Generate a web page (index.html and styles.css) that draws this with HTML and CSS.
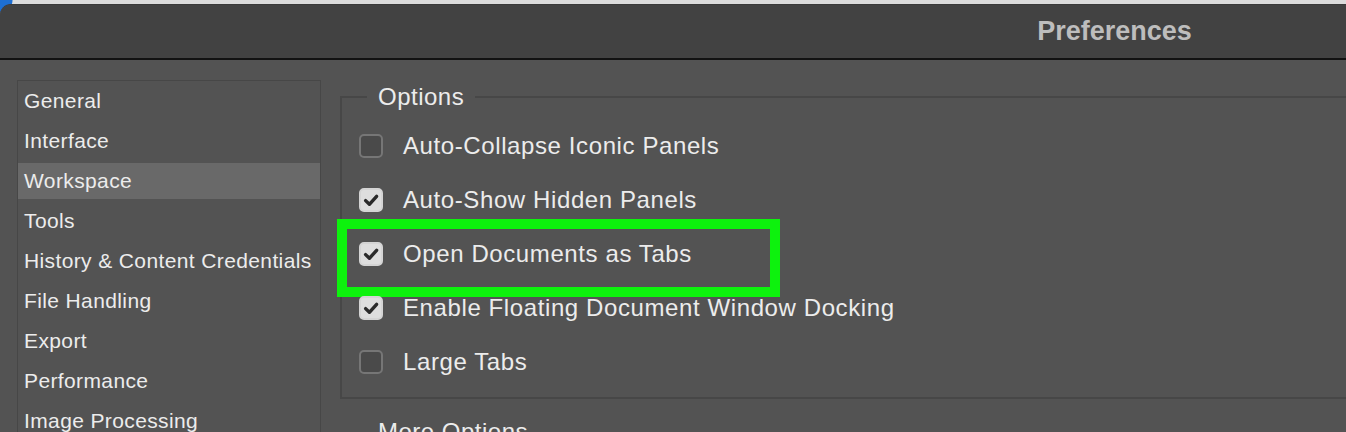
FILE: index.html
```html
<!DOCTYPE html>
<html lang="en">
<head>
<meta charset="utf-8">
<title>Preferences</title>
<link rel="stylesheet" href="styles.css">
</head>
<body>
<div class="window">
  <header class="titlebar"><h1 class="title">Preferences</h1></header>
  <main class="content">
    <nav class="sidebar">
      <ul class="nav-list">
        <li class="nav-item">General</li>
        <li class="nav-item">Interface</li>
        <li class="nav-item selected">Workspace</li>
        <li class="nav-item">Tools</li>
        <li class="nav-item">History &amp; Content Credentials</li>
        <li class="nav-item">File Handling</li>
        <li class="nav-item">Export</li>
        <li class="nav-item">Performance</li>
        <li class="nav-item">Image Processing</li>
      </ul>
    </nav>
    <section class="panel">
      <fieldset class="group">
        <legend class="legend">Options</legend>
        <label class="row"><span class="box"></span><span class="label">Auto-Collapse Iconic Panels</span></label>
        <label class="row"><span class="box checked"><svg viewBox="0 0 20 20" class="tick"><path d="M4.6 10.6 L8.4 14.3 L15.6 6.3"/></svg></span><span class="label">Auto-Show Hidden Panels</span></label>
        <label class="row highlighted"><span class="box checked"><svg viewBox="0 0 20 20" class="tick"><path d="M4.6 10.6 L8.4 14.3 L15.6 6.3"/></svg></span><span class="label">Open Documents as Tabs</span><span class="highlight"></span></label>
        <label class="row"><span class="box checked"><svg viewBox="0 0 20 20" class="tick"><path d="M4.6 10.6 L8.4 14.3 L15.6 6.3"/></svg></span><span class="label">Enable Floating Document Window Docking</span></label>
        <label class="row"><span class="box"></span><span class="label">Large Tabs</span></label>
      </fieldset>
      <div class="more"><span class="legend more-legend">More Options</span></div>
    </section>
  </main>
</div>
</body>
</html>
```
FILE: styles.css
```css
* { box-sizing: border-box; }
html, body { margin: 0; padding: 0; }
body {
  width: 1346px;
  height: 432px;
  overflow: hidden;
  background:
    radial-gradient(circle at 0 0, #1e6fd2 0 12px, transparent 13px),
    #dcdcdc;
  font-family: "Liberation Sans", Arial, sans-serif;
  color: #ececec;
}
.window {
  margin-top: 4px;
  width: 2229px;
  height: 500px;
  background: #535353;
  border-top-left-radius: 11px;
  overflow: hidden;
  border-top: 1px solid #3a3a3a;
}
.titlebar {
  height: 55px;
  background: #424242;
  border-bottom: 2px solid #121212;
  display: flex;
  align-items: center;
  justify-content: center;
}
.title {
  margin: 0;
  font-size: 27px;
  font-weight: bold;
  color: #bdbdbd;
}
.content {
  display: flex;
  align-items: flex-start;
  padding: 20px 0 0 17px;
}
.sidebar {
  width: 304px;
  height: 400px;
  border: 1px solid #474747;
  border-bottom: none;
  background: #535353;
  padding-top: 2px;
}
.nav-list {
  list-style: none;
  margin: 0;
  padding: 0;
  display: flex;
  flex-direction: column;
  gap: 4px;
}
.nav-item {
  height: 36px;
  display: flex;
  align-items: center;
  padding-left: 6px;
  font-size: 21px;
  letter-spacing: 0.38px;
  color: #ececec;
}
.nav-item.selected { background: #696969; }
.panel {
  margin-left: 19px;
  margin-top: 3px;
  width: 1500px;
}
.group {
  margin: 0;
  padding: 8px 0 0 17px;
  border: 2px solid #474747;
  border-right: none;
  height: 316px;
  min-width: 0;
}
.legend {
  font-size: 24px;
  letter-spacing: 0.5px;
  color: #ececec;
  padding: 0 11px;
  margin-left: 8px;
  line-height: 28px;
}
.row {
  position: relative;
  height: 54px;
  display: flex;
  align-items: center;
  gap: 20px;
}
.box {
  width: 24px;
  height: 24px;
  border-radius: 5px;
  border: 2px solid #767676;
  background: #4a4a4a;
  flex: none;
  display: flex;
}
.box.checked {
  background: #dedede;
  border-color: #d4d4d4;
}
.tick {
  width: 20px;
  height: 20px;
  fill: none;
  stroke: #2b2b2b;
  stroke-width: 3.4;
  stroke-linecap: round;
  stroke-linejoin: round;
}
.label {
  font-size: 24px;
  letter-spacing: 0.6px;
  color: #ececec;
}
.highlight {
  position: absolute;
  left: -22px;
  top: -8px;
  width: 443px;
  height: 78px;
  border: 10px solid #0df20d;
}
.more {
  padding-top: 19px;
  padding-left: 36px;
}
.more-legend { margin-left: 0; padding-left: 2px; }
```
